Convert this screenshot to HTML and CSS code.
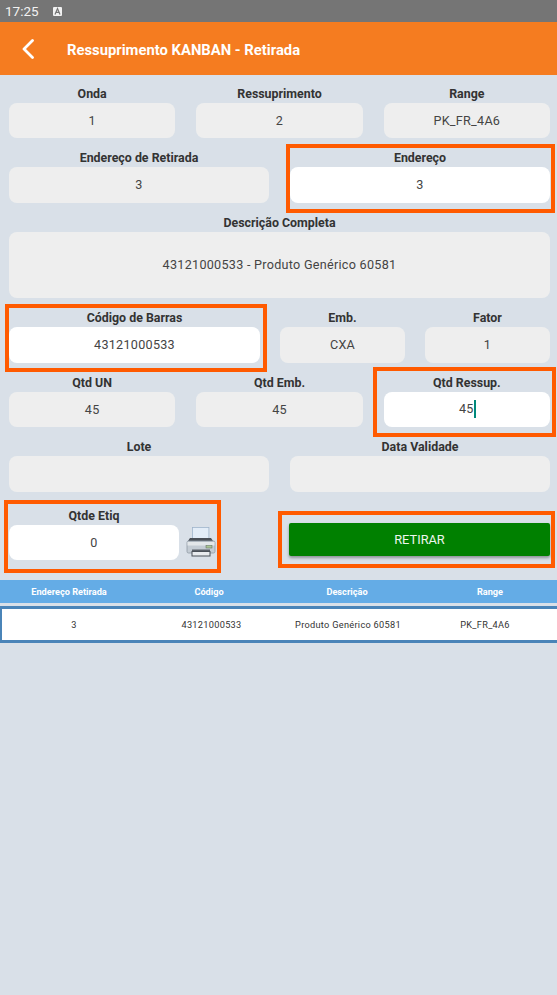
FILE: index.html
```html
<!DOCTYPE html>
<html lang="pt-BR">
<head>
  <meta charset="UTF-8">
  <meta name="viewport" content="width=device-width, initial-scale=1.0">
  <title>Ressuprimento KANBAN - Retirada</title>
  <link rel="stylesheet" href="styles.css">
</head>
<body>

  <!-- Barra de status -->
  <div class="statusbar">
    <span class="clock">17:25</span>
    <svg class="status-icon" width="9" height="9" viewBox="0 0 9 9">
      <rect width="9" height="9" rx="1" fill="#f2f2f2"/>
      <path d="M2 7.4 4.5 1.6 7 7.4M3 5.4h3" fill="none" stroke="#757575" stroke-width="1.2"/>
    </svg>
  </div>

  <!-- Cabecalho -->
  <div class="appbar">
    <svg class="back" width="14" height="20" viewBox="0 0 14 20">
      <path d="M11.5 1.5 3 10l8.500 8.500" fill="none" stroke="#fff" stroke-width="2.800" stroke-linecap="round" stroke-linejoin="round"/>
    </svg>
    <span class="title">Ressuprimento KANBAN - Retirada</span>
  </div>

  <div class="form">
    <div class="row cols-3">
      <div class="field"><label>Onda</label><div class="input">1</div></div>
      <div class="field"><label>Ressuprimento</label><div class="input">2</div></div>
      <div class="field"><label>Range</label><div class="input">PK_FR_4A6</div></div>
    </div>

    <div class="row cols-2">
      <div class="field"><label>Endereço de Retirada</label><div class="input">3</div></div>
      <div class="field"><label>Endereço</label><div class="input active">3</div></div>
    </div>

    <div class="row">
      <div class="field"><label>Descrição Completa</label><div class="input tall">43121000533 - Produto Genérico 60581</div></div>
    </div>

    <div class="row cols-barcode">
      <div class="field"><label>Código de Barras</label><div class="input active">43121000533</div></div>
      <div class="field"><label>Emb.</label><div class="input">CXA</div></div>
      <div class="field"><label>Fator</label><div class="input">1</div></div>
    </div>

    <div class="row cols-3">
      <div class="field"><label>Qtd UN</label><div class="input">45</div></div>
      <div class="field"><label>Qtd Emb.</label><div class="input">45</div></div>
      <div class="field"><label>Qtd Ressup.</label><div class="input active"><span class="caret-text">45</span></div></div>
    </div>

    <div class="row cols-2">
      <div class="field"><label>Lote</label><div class="input"></div></div>
      <div class="field"><label>Data Validade</label><div class="input"></div></div>
    </div>

    <div class="row cols-2 last-row">
      <div class="etiq">
        <div class="field etiq-field"><label>Qtde Etiq</label><div class="input active">0</div></div>
        <svg class="printer" width="30" height="30" viewBox="0 0 30 30">
          <rect x="6.400" y=".4" width="16.500" height="11" fill="#e3edf8" stroke="#9fb4cb" stroke-width=".8"/>
          <path d="M4 11h21l2 3H2z" fill="#4a5058"/>
          <rect x="1" y="14" width="28" height="12" rx="1.500" fill="#c4ccd4" stroke="#8f99a3" stroke-width=".8"/>
          <rect x="1.500" y="15" width="27" height="3.500" fill="#e3e7ea"/>
          <rect x="20" y="18.500" width="6" height="2.500" fill="#a9c596" stroke="#5c6a5a" stroke-width=".5"/>
          <rect x="6" y="22.500" width="18" height="2" fill="#5a6068"/>
          <rect x="6" y="24.500" width="18" height="4.500" fill="#e8ebee" stroke="#4a5058" stroke-width="1"/>
        </svg>
      </div>
      <button class="btn-retirar">RETIRAR</button>
    </div>

    <!-- Campos destacados -->
    <div class="mark mark-endereco"></div>
    <div class="mark mark-barras"></div>
    <div class="mark mark-ressup"></div>
    <div class="mark mark-etiq"></div>
    <div class="mark mark-retirar"></div>
  </div>

  <!-- Lista -->
  <div class="table-head">
    <span>Endereço Retirada</span>
    <span>Código</span>
    <span>Descrição</span>
    <span class="head-range">Range</span>
  </div>
  <div class="table-row">
    <span>3</span>
    <span>43121000533</span>
    <span>Produto Genérico 60581</span>
    <span>PK_FR_4A6</span>
  </div>

</body>
</html>
```

FILE: styles.css
```css
* {
  box-sizing: border-box;
}

html, body {
  height: 100%;
}

body {
  margin: 0;
  background-color: #d9e0e8;
  font-family: Roboto, "Liberation Sans", sans-serif;
  color: #333;
  overflow: hidden;
}

/* Barra de status */
.statusbar {
  display: flex;
  align-items: center;
  height: 22px;
  padding-left: 5px;
  background-color: #757575;
  color: #f2f2f2;
  font-size: 13.500px;
}

.status-icon {
  margin-left: 14px;
}

/* Cabecalho */
.appbar {
  display: flex;
  align-items: center;
  height: 53px;
  padding-left: 21px;
  background-color: #f57c20;
  color: white;
}

.title {
  margin-left: 32px;
  padding-top: 2px;
  font-size: 14.800px;
  font-weight: 700;
}

/* Formulario */
.form {
  position: relative;
  height: 505px;
  padding: 8.500px 7px 0 9px;
}

.row {
  display: grid;
  grid-template-columns: 1fr;
  column-gap: 21px;
  margin-bottom: 10px;
}

.cols-3 {
  grid-template-columns: repeat(3, 1fr);
}

.cols-2 {
  grid-template-columns: repeat(2, 1fr);
}

.cols-barcode {
  grid-template-columns: 251px 125px 125px;
  column-gap: 20px;
}

.field label {
  display: block;
  height: 19px;
  line-height: 20px;
  text-align: center;
  font-size: 12.400px;
  font-weight: 700;
}

.input {
  display: flex;
  align-items: center;
  justify-content: center;
  height: 35.500px;
  background-color: #eeeeee;
  border-radius: 8px;
  font-size: 12.600px;
  letter-spacing: 0.28px;
  color: #444;
}

.input.active {
  background-color: white;
}

.input.tall {
  height: 66.500px;
}

.caret-text {
  padding-left: 1px;
  border-right: 2px solid #00897b;
  line-height: 18px;
}

/* Ultima linha */
.last-row {
  margin-top: 14px;
}

.etiq {
  display: flex;
  align-items: flex-end;
}

.etiq-field {
  width: 170px;
}

.printer {
  margin-left: 7px;
  margin-bottom: 3.500px;
}

.btn-retirar {
  align-self: start;
  height: 33px;
  margin-top: 17.500px;
  margin-left: -1px;
  border: none;
  border-radius: 2px;
  background-color: #008000;
  color: #eef6ee;
  font-family: inherit;
  font-size: 12.800px;
  box-shadow: 0 2px 3px rgba(0, 0, 0, 0.35);
}

/* Campos destacados */
.mark {
  position: absolute;
  border: 4px solid #ff5a00;
}

.mark-endereco {
  left: 286px;
  top: 69px;
  width: 269px;
  height: 69px;
}

.mark-barras {
  left: 5px;
  top: 229px;
  width: 262px;
  height: 68px;
}

.mark-ressup {
  left: 373px;
  top: 292px;
  width: 183px;
  height: 70px;
}

.mark-etiq {
  left: 4px;
  top: 425px;
  width: 217px;
  height: 73px;
}

.mark-retirar {
  left: 278px;
  top: 436px;
  width: 277px;
  height: 57px;
}

/* Lista */
.table-head, .table-row {
  display: grid;
  align-items: center;
  text-align: center;
}

.table-head {
  grid-template-columns: 138px 142px 134px 1fr;
  height: 23px;
  background-color: #64ace6;
  color: white;
  font-size: 9.200px;
  font-weight: 700;
}

.head-range {
  padding-left: 9px;
}

.table-row {
  grid-template-columns: 144px 131px 142px 132px;
  height: 37px;
  margin-top: 3px;
  background-color: white;
  border-top: 3px solid #4a84b8;
  border-bottom: 3px solid #4a84b8;
  border-left: 2px solid #4a84b8;
  color: #333;
  font-size: 9.200px;
  letter-spacing: 0.3px;
}
```
